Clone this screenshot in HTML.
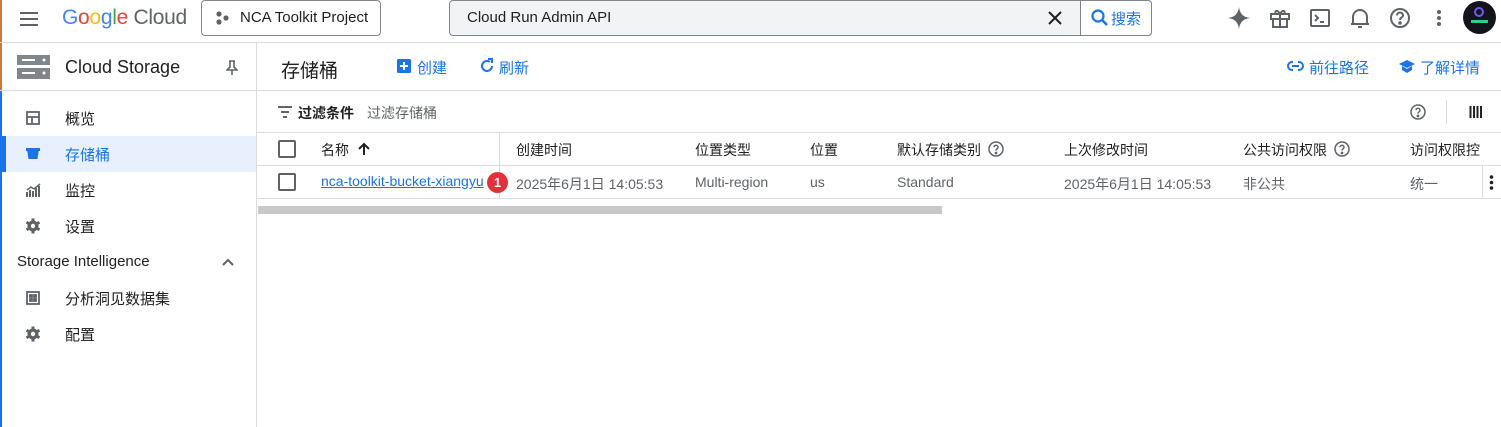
<!DOCTYPE html>
<html><head><meta charset="utf-8"><style>
*{margin:0;padding:0;box-sizing:border-box}
body{width:1501px;height:427px;overflow:hidden;background:#fff;font-family:"Liberation Sans","Noto Sans CJK SC",sans-serif;color:#202124;position:relative;font-size:14px}
.a{position:absolute;white-space:nowrap}
.hl{position:absolute;background:#dadce0}
.blue{color:#1a73e8}
.g{color:#5f6368}
.h{font-size:14px;color:#202124}
</style></head><body>
<div class="a" style="left:0;top:0;width:2px;height:90px;background:#c87a3a"></div>
<div class="a" style="left:0;top:90px;width:2px;height:337px;background:#1a73e8"></div>
<svg class="a" style="left:19px;top:9px" width="20" height="20" viewBox="0 0 20 20"><path d="M1 4h18M1 10h18M1 16h18" stroke="#5f6368" stroke-width="2"/></svg>
<div class="a" style="left:62px;top:6px;font-size:21px;letter-spacing:-0.3px"><span style="color:#4285f4">G</span><span style="color:#ea4335">o</span><span style="color:#fbbc04">o</span><span style="color:#4285f4">g</span><span style="color:#34a853">l</span><span style="color:#ea4335">e</span> <span style="color:#5f6368">Cloud</span></div>
<div class="a" style="left:201px;top:0;width:180px;height:36px;border:1px solid #80868b;border-radius:4px"></div>
<svg class="a" style="left:215px;top:11px" width="16" height="14"><circle cx="4" cy="3" r="2.6" fill="#5f6368"/><circle cx="4" cy="11" r="2.6" fill="#5f6368"/><circle cx="11" cy="7" r="2.6" fill="#5f6368"/></svg>
<div class="a" style="left:240px;top:9px;font-size:15px">NCA Toolkit Project</div>
<div class="a" style="left:449px;top:0;width:703px;height:36px;border:1px solid #80868b;border-radius:4px;background:#f1f3f4"></div>
<div class="a" style="left:1080px;top:0;width:72px;height:36px;border:1px solid #80868b;border-radius:0 4px 4px 0;background:#fff"></div>
<div class="a" style="left:467px;top:9px;font-size:15px">Cloud Run Admin API</div>
<svg class="a" style="left:1048px;top:11px" width="14" height="14"><path d="M1 1l12 12M13 1L1 13" stroke="#202124" stroke-width="2"/></svg>
<svg class="a" style="left:1091px;top:9px" width="18" height="18"><circle cx="7" cy="7" r="5.5" stroke="#1a73e8" stroke-width="2.2" fill="none"/><path d="M11 11l5 5" stroke="#1a73e8" stroke-width="2.5"/></svg>
<div class="a blue" style="left:1111px;top:8px;font-size:15px">搜索</div>
<svg class="a" style="left:1228px;top:7px" width="22" height="22" viewBox="0 0 22 22"><path d="M11 0C12 7 15 10 22 11 15 12 12 15 11 22 10 15 7 12 0 11 7 10 10 7 11 0Z" fill="#5f6368"/></svg>
<svg class="a" style="left:1269px;top:7px" width="22" height="22" viewBox="0 0 22 22" fill="none" stroke="#5f6368" stroke-width="2"><rect x="2" y="7" width="18" height="5"/><path d="M4 12v8h14v-8M11 7v13M11 7C8 2 5 4 7 7M11 7c3-5 6-3 4 0"/></svg>
<svg class="a" style="left:1310px;top:8px" width="20" height="20" fill="none" stroke="#5f6368" stroke-width="2"><rect x="1" y="2" width="18" height="16" rx="1"/><path d="M5 7l3 3-3 3M10 14h4"/></svg>
<svg class="a" style="left:1350px;top:7px" width="20" height="22" fill="none" stroke="#5f6368" stroke-width="2"><path d="M3 17V10a7 7 0 0114 0v7zM1 17h18M8 20h4"/></svg>
<svg class="a" style="left:1389px;top:7px" width="22" height="22" fill="none" stroke="#5f6368" stroke-width="2"><circle cx="11" cy="11" r="9"/><path d="M8 8.5a3 3 0 116 0c0 2-3 2-3 4.5"/><circle cx="11" cy="16" r=".8" fill="#5f6368"/></svg>
<svg class="a" style="left:1436px;top:9px" width="6" height="18"><circle cx="3" cy="3" r="2" fill="#5f6368"/><circle cx="3" cy="9" r="2" fill="#5f6368"/><circle cx="3" cy="15" r="2" fill="#5f6368"/></svg>
<div class="a" style="left:1463px;top:1px;width:33px;height:33px;border-radius:50%;background:#15131c"><div style="position:absolute;left:11px;top:6px;width:10px;height:10px;border-radius:50%;border:2px solid #6b5cf0"></div><div style="position:absolute;left:8px;top:19px;width:17px;height:3px;background:#3c8"></div></div>
<div class="hl" style="left:0;top:42px;width:1501px;height:1px"></div>
<div class="hl" style="left:256px;top:43px;width:1px;height:384px"></div>
<svg class="a" style="left:17px;top:55px" width="33" height="24"><rect x="0" y="0" width="33" height="10" fill="#80868b"/><rect x="0" y="13" width="33" height="11" fill="#80868b"/><rect x="5" y="4" width="13" height="2" fill="#fff"/><rect x="5" y="17" width="13" height="2" fill="#fff"/><circle cx="27" cy="5" r="1.5" fill="#fff"/><circle cx="27" cy="18" r="1.5" fill="#fff"/></svg>
<div class="a" style="left:65px;top:57px;font-size:18px">Cloud Storage</div>
<svg class="a" style="left:226px;top:60px" width="12" height="16" fill="none" stroke="#5f6368" stroke-width="1.6"><path d="M3 1h6M4 1v6L1 10h10L8 7V1M6 10v5"/></svg>
<div class="hl" style="left:0;top:90px;width:1501px;height:1px"></div>
<svg class="a" style="left:26px;top:111px" width="14" height="14" fill="none" stroke="#5f6368" stroke-width="1.8"><rect x="1" y="1" width="12" height="12"/><path d="M1 6h12M6 6v7"/></svg>
<div class="a" style="left:65px;top:108px;font-size:15px">概览</div>
<div class="a" style="left:2px;top:136px;width:254px;height:36px;background:#e8f0fe"></div>
<div class="a" style="left:2px;top:136px;width:4px;height:36px;background:#1a73e8"></div>
<svg class="a" style="left:26px;top:146px" width="14" height="14"><path d="M1 3h12l-1.5 10h-9z" fill="#1a73e8"/><rect x="0" y="2" width="14" height="3" fill="#1a73e8"/></svg>
<div class="a blue" style="left:65px;top:144px;font-size:15px">存储桶</div>
<svg class="a" style="left:26px;top:183px" width="15" height="14"><path d="M1 14V9M4 14V7M7 14V8M10 14V5M13 14V3" stroke="#5f6368" stroke-width="2"/><path d="M1 7l4-3 3 2 6-5" stroke="#5f6368" stroke-width="1.5" fill="none"/></svg>
<div class="a" style="left:65px;top:180px;font-size:15px">监控</div>
<svg class="a" style="left:25px;top:218px" width="16" height="16" viewBox="0 0 16 16"><g fill="#5f6368"><circle cx="8" cy="8" r="5.5"/><rect x="6.5" y="0.5" width="3" height="15"/><rect x="6.5" y="0.5" width="3" height="15" transform="rotate(60 8 8)"/><rect x="6.5" y="0.5" width="3" height="15" transform="rotate(120 8 8)"/></g><circle cx="8" cy="8" r="2.2" fill="#fff"/></svg>
<div class="a" style="left:65px;top:216px;font-size:15px">设置</div>
<div class="a" style="left:17px;top:253px;font-size:15px">Storage Intelligence</div>
<svg class="a" style="left:222px;top:258px" width="12" height="8"><path d="M1 7l5-5 5 5" stroke="#5f6368" stroke-width="2" fill="none"/></svg>
<svg class="a" style="left:26px;top:291px" width="14" height="14" fill="none" stroke="#5f6368" stroke-width="1.8"><rect x="1" y="1" width="12" height="12"/><rect x="4" y="4" width="2" height="2" fill="#5f6368"/><rect x="8" y="4" width="2" height="2" fill="#5f6368"/><rect x="4" y="8" width="2" height="2" fill="#5f6368"/><rect x="8" y="8" width="2" height="2" fill="#5f6368"/></svg>
<div class="a" style="left:65px;top:288px;font-size:15px">分析洞见数据集</div>
<svg class="a" style="left:25px;top:326px" width="16" height="16" viewBox="0 0 16 16"><g fill="#5f6368"><circle cx="8" cy="8" r="5.5"/><rect x="6.5" y="0.5" width="3" height="15"/><rect x="6.5" y="0.5" width="3" height="15" transform="rotate(60 8 8)"/><rect x="6.5" y="0.5" width="3" height="15" transform="rotate(120 8 8)"/></g><circle cx="8" cy="8" r="2.2" fill="#fff"/></svg>
<div class="a" style="left:65px;top:324px;font-size:15px">配置</div>
<div class="a" style="left:281px;top:56px;font-size:19px">存储桶</div>
<svg class="a" style="left:397px;top:59px" width="14" height="14"><rect width="14" height="14" rx="1.5" fill="#1a73e8"/><path d="M7 3v8M3 7h8" stroke="#fff" stroke-width="2"/></svg>
<div class="a blue" style="left:417px;top:57px;font-size:15px">创建</div>
<svg class="a" style="left:479px;top:58px" width="16" height="16" fill="none" stroke="#1a73e8" stroke-width="2"><path d="M13 8a5 5 0 11-2-4"/><path d="M9 1h4v4" /></svg>
<div class="a blue" style="left:499px;top:57px;font-size:15px">刷新</div>
<svg class="a" style="left:1287px;top:60px" width="17" height="12" fill="none" stroke="#1a73e8" stroke-width="2"><path d="M6 2H5a4 4 0 000 8h1M11 2h1a4 4 0 010 8h-1M5 6h7"/></svg>
<div class="a blue" style="left:1309px;top:57px;font-size:15px">前往路径</div>
<svg class="a" style="left:1398px;top:59px" width="18" height="15"><path d="M9 1L1 5l8 4 8-4z M4 7v4l5 3 5-3V7l-5 3z" fill="#1a73e8"/></svg>
<div class="a blue" style="left:1420px;top:57px;font-size:15px">了解详情</div>
<svg class="a" style="left:278px;top:106px" width="14" height="12"><path d="M0 1h14M3 6h8M5 11h4" stroke="#5f6368" stroke-width="2"/></svg>
<div class="a" style="left:298px;top:103px;font-size:14px;font-weight:bold">过滤条件</div>
<div class="a g" style="left:367px;top:103px;font-size:14px">过滤存储桶</div>
<svg class="a" style="left:1410px;top:104px" width="16" height="16" fill="none" stroke="#5f6368" stroke-width="1.5"><circle cx="8" cy="8" r="7"/><path d="M6 6.3a2 2 0 114 0c0 1.5-2 1.5-2 3.2"/><circle cx="8" cy="12" r=".6" fill="#5f6368"/></svg>
<div class="hl" style="left:1446px;top:100px;width:1px;height:24px"></div>
<svg class="a" style="left:1469px;top:106px" width="13" height="12"><path d="M1.5 0v12M5 0v12M8.5 0v12M12 0v12" stroke="#202124" stroke-width="2"/></svg>
<div class="hl" style="left:257px;top:132px;width:1244px;height:1px"></div>
<div class="hl" style="left:257px;top:165px;width:1244px;height:1px"></div>
<div class="hl" style="left:257px;top:198px;width:1244px;height:1px"></div>
<div class="hl" style="left:499px;top:133px;width:1px;height:65px"></div>
<div class="a" style="left:278px;top:140px;width:18px;height:18px;border:2px solid #5f6368;border-radius:2px"></div>
<div class="a" style="left:278px;top:173px;width:18px;height:18px;border:2px solid #5f6368;border-radius:2px"></div>
<div class="a h" style="left:321px;top:140px">名称</div>
<svg class="a" style="left:357px;top:142px" width="14" height="14"><path d="M7 13V2M2 7l5-5 5 5" stroke="#202124" stroke-width="2" fill="none"/></svg>
<div class="a h" style="left:516px;top:140px">创建时间</div>
<div class="a h" style="left:695px;top:140px">位置类型</div>
<div class="a h" style="left:810px;top:140px">位置</div>
<div class="a h" style="left:897px;top:140px">默认存储类别</div>
<svg class="a" style="left:988px;top:141px" width="16" height="16" fill="none" stroke="#5f6368" stroke-width="1.5"><circle cx="8" cy="8" r="7"/><path d="M6 6.3a2 2 0 114 0c0 1.5-2 1.5-2 3.2"/><circle cx="8" cy="12" r=".6" fill="#5f6368"/></svg>
<div class="a h" style="left:1064px;top:140px">上次修改时间</div>
<div class="a h" style="left:1243px;top:140px">公共访问权限</div>
<svg class="a" style="left:1334px;top:141px" width="16" height="16" fill="none" stroke="#5f6368" stroke-width="1.5"><circle cx="8" cy="8" r="7"/><path d="M6 6.3a2 2 0 114 0c0 1.5-2 1.5-2 3.2"/><circle cx="8" cy="12" r=".6" fill="#5f6368"/></svg>
<div class="a h" style="left:1410px;top:140px">访问权限控</div>
<div class="a blue" style="left:321px;top:173px;font-size:14px;text-decoration:underline">nca-toolkit-bucket-xiangyu</div>
<div class="a" style="left:487px;top:172px;width:21px;height:21px;border-radius:50%;background:#e5303b;color:#fff;font-size:13px;font-weight:bold;text-align:center;line-height:21px">1</div>
<div class="a g" style="left:516px;top:174px;font-size:14px">2025年6月1日 14:05:53</div>
<div class="a g" style="left:695px;top:174px;font-size:14px">Multi-region</div>
<div class="a g" style="left:810px;top:174px;font-size:14px">us</div>
<div class="a g" style="left:897px;top:174px;font-size:14px">Standard</div>
<div class="a g" style="left:1064px;top:174px;font-size:14px">2025年6月1日 14:05:53</div>
<div class="a g" style="left:1243px;top:174px;font-size:14px">非公共</div>
<div class="a g" style="left:1410px;top:174px;font-size:14px">统一</div>
<div class="a" style="left:1482px;top:166px;width:19px;height:32px;background:#fff;border-left:1px solid #dadce0"></div>
<svg class="a" style="left:1489px;top:175px" width="5" height="15"><circle cx="2.5" cy="2" r="1.8" fill="#202124"/><circle cx="2.5" cy="7.5" r="1.8" fill="#202124"/><circle cx="2.5" cy="13" r="1.8" fill="#202124"/></svg>
<div class="a" style="left:258px;top:206px;width:684px;height:8px;background:#c8c8c8"></div>
</body></html>
